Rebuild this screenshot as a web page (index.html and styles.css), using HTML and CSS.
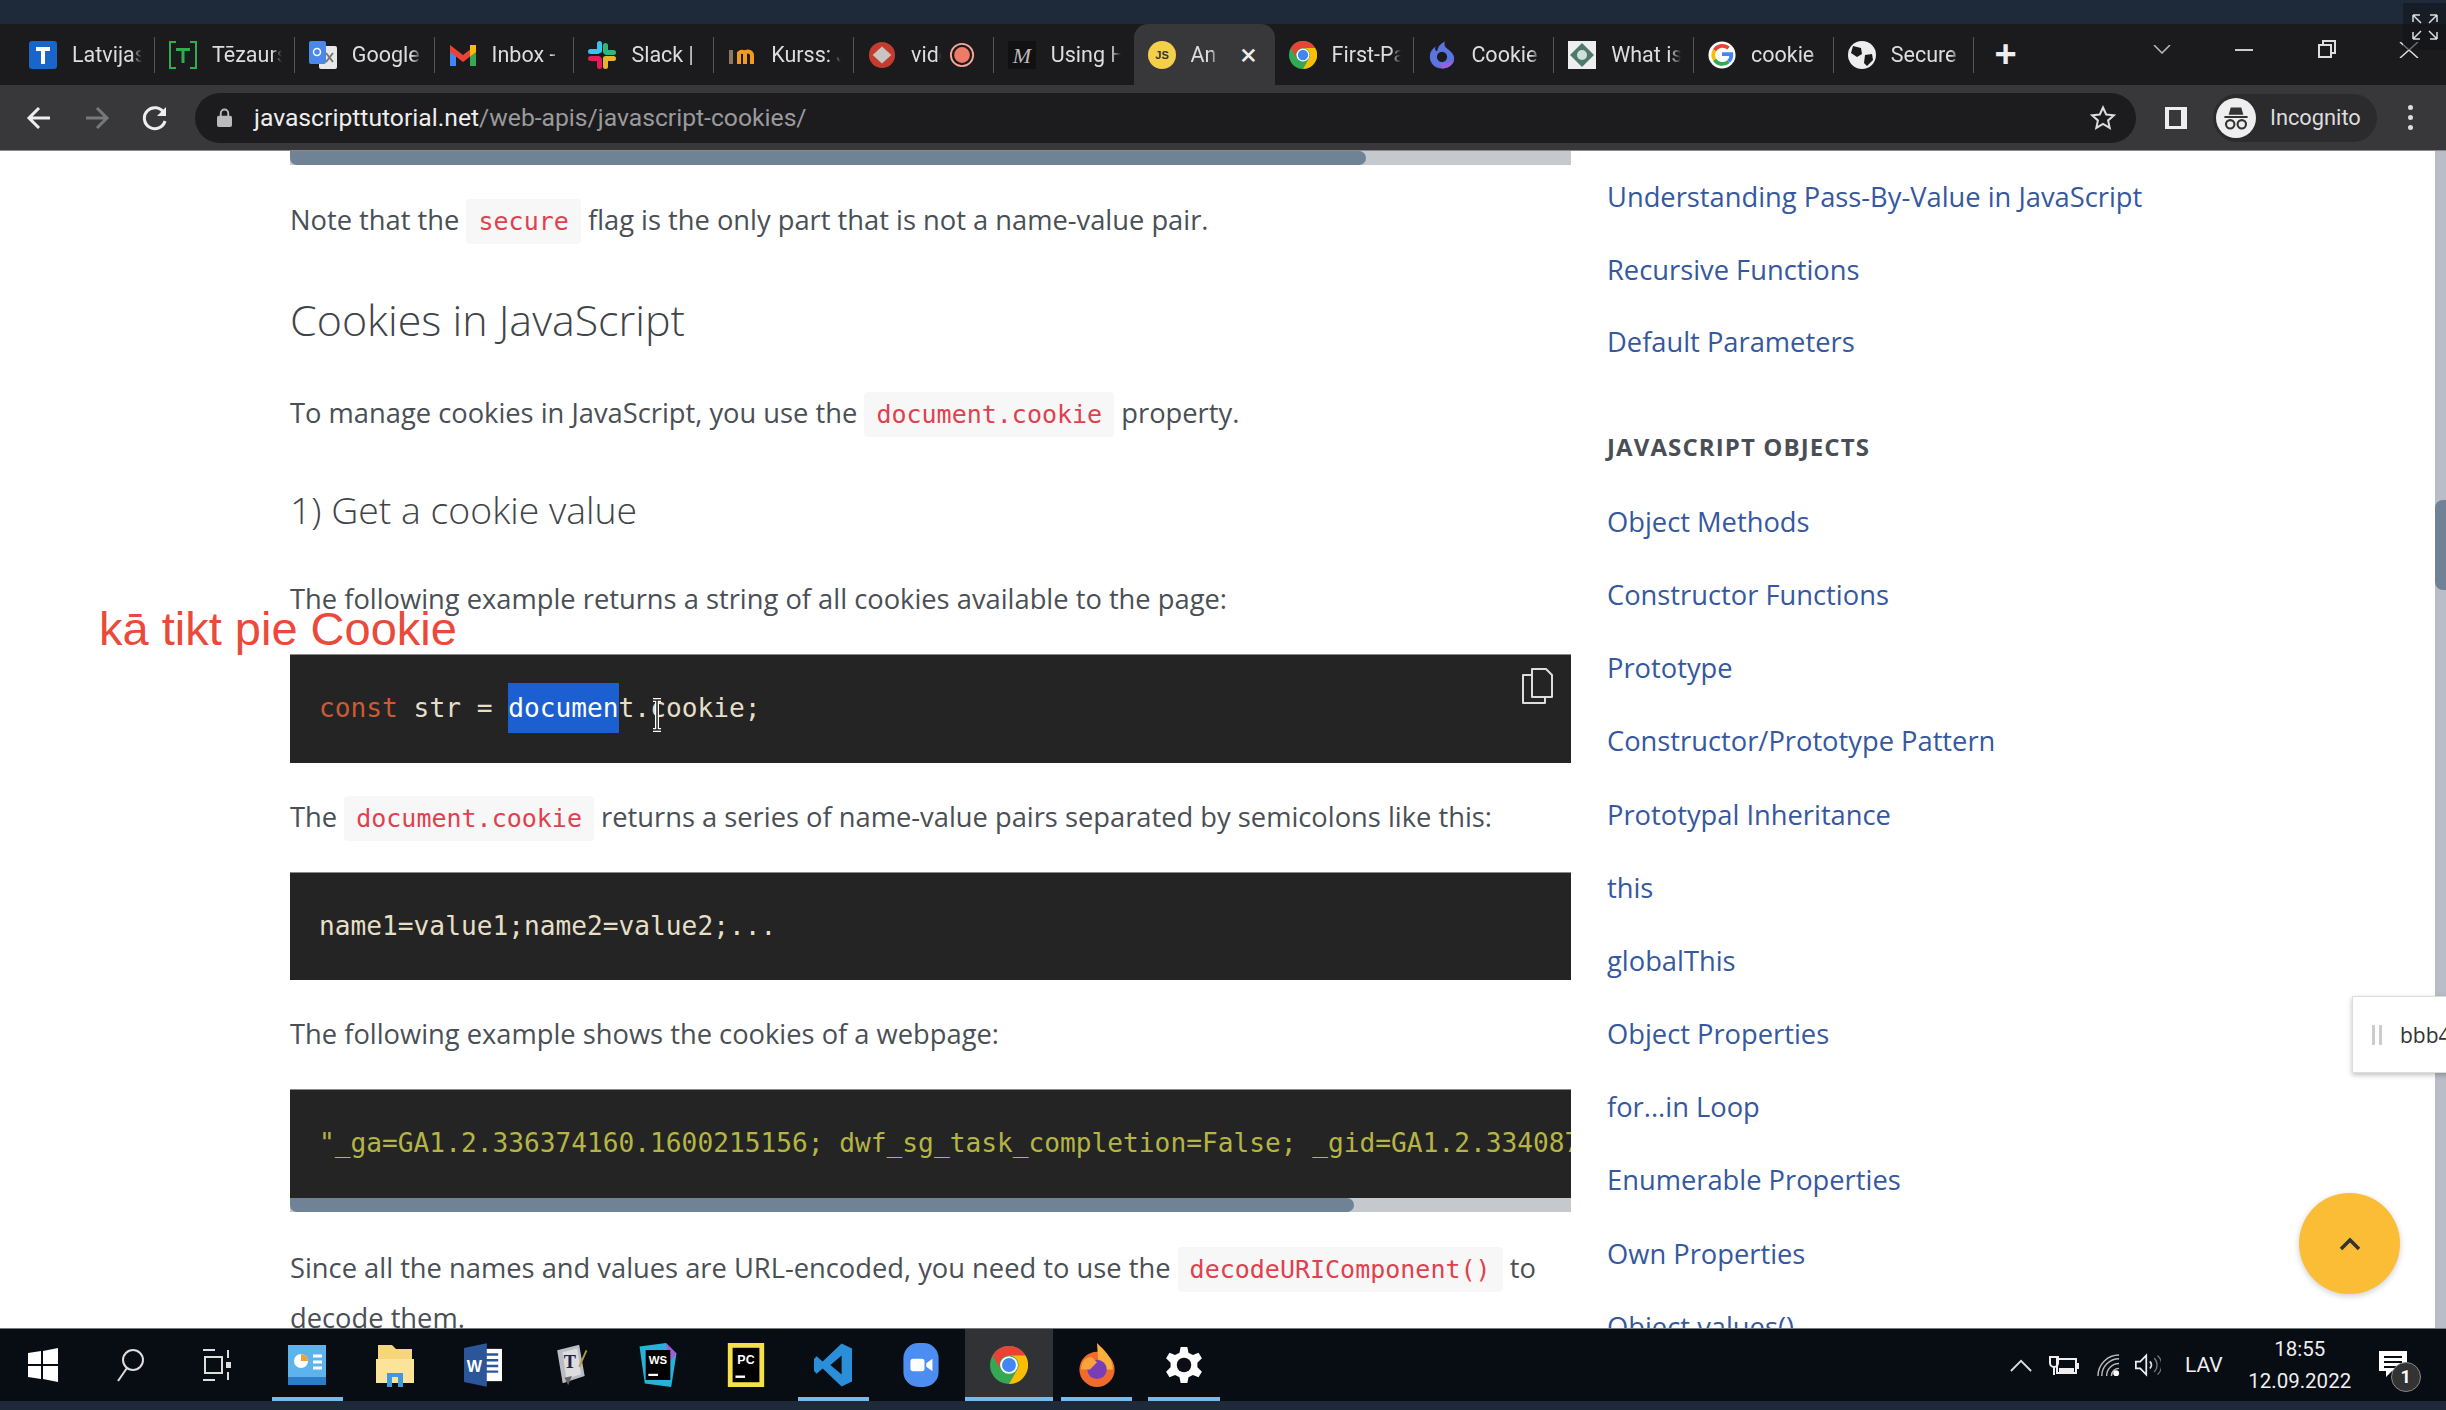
FILE: index.html
```html
<!DOCTYPE html>
<html lang="en">
<head>
    <meta charset="UTF-8">
    <meta name="viewport" content="width=device-width, initial-scale=1.0">
    <title>JavaScript Cookies</title>
    <link rel="stylesheet" href="styles.css">
</head>
<body>
    <div class="top-strip"></div>

    <div class="tab-bar">
        <div class="tab"><svg class="fav" viewBox="0 0 28 28"><rect width="28" height="28" rx="3" fill="#1a66c8"/><path d="M7 6h14v4h-5v13h-4V10H7z" fill="#fff"/></svg><span class="tab-title">Latvijas</span></div>
        <div class="tab"><svg class="fav" viewBox="0 0 28 28"><path d="M7 1H1v26h6M21 1h6v26h-6" fill="none" stroke="#2fae4e" stroke-width="2"/><path d="M7 7h14v3h-5.500v12h-3V10H7z" fill="#2fae4e"/></svg><span class="tab-title">Tēzaurs</span></div>
        <div class="tab"><svg class="fav" viewBox="0 0 28 28"><rect x="10" y="5" width="18" height="23" rx="2" fill="#e8e8e8"/><rect width="17" height="23" rx="2" fill="#4a89e8"/><path d="M17 12l7 9M24 12l-7 9" stroke="#777" stroke-width="2"/><circle cx="8" cy="11" r="3.500" fill="none" stroke="#fff" stroke-width="1.500"/></svg><span class="tab-title">Google</span></div>
        <div class="tab"><svg class="fav" viewBox="0 0 28 28"><path d="M1 4v21h6V11z" fill="#4285f4"/><path d="M27 4v21h-6V11z" fill="#34a853"/><path d="M1 4l13 10L27 4v7L14 21 1 11z" fill="#ea4335"/><path d="M21 4h6v7l-6 4.500z" fill="#fbbc04"/></svg><span class="tab-title">Inbox -</span></div>
        <div class="tab"><svg class="fav" viewBox="0 0 28 28"><rect x="9" y="0" width="5" height="12" rx="2.500" fill="#36c5f0"/><rect x="0" y="8" width="12" height="5" rx="2.500" fill="#36c5f0"/><rect x="15" y="2" width="5" height="11" rx="2.500" fill="#2eb67d"/><rect x="16" y="9" width="12" height="5" rx="2.500" fill="#2eb67d"/><rect x="15" y="15" width="13" height="5" rx="2.500" fill="#ecb22e"/><rect x="15" y="16" width="5" height="12" rx="2.500" fill="#ecb22e"/><rect x="9" y="16" width="5" height="12" rx="2.500" fill="#e01e5a"/><rect x="0" y="15" width="13" height="5" rx="2.500" fill="#e01e5a"/></svg><span class="tab-title">Slack |</span></div>
        <div class="tab"><svg class="fav" viewBox="0 0 28 22"><path d="M3 6v14" stroke="#8a7a60" stroke-width="4"/><path d="M11 20V9a4 4 0 0 1 6 0v11M17 9a4 4 0 0 1 7 3v8" fill="none" stroke="#f59b1c" stroke-width="4"/></svg><span class="tab-title">Kurss: J</span></div>
        <div class="tab"><svg class="fav" viewBox="0 0 30 30"><circle cx="15" cy="15" r="14" fill="#c43c30"/><path d="M5 15l10-9 10 9-10 9z" fill="#c9c4c0"/></svg><span class="tab-title short">video</span><svg class="rec-dot" viewBox="0 0 28 28"><circle cx="14" cy="14" r="12" fill="none" stroke="#f4a898" stroke-width="2"/><circle cx="14" cy="14" r="8.500" fill="#ee7a68"/></svg></div>
        <div class="tab before-active"><svg class="fav" viewBox="0 0 28 28"><rect width="28" height="28" fill="#111"/><text x="14" y="22" class="fav-m">M</text></svg><span class="tab-title">Using H</span></div>
        <div class="tab active"><svg class="fav" viewBox="0 0 28 28"><circle cx="14" cy="14" r="14" fill="#f4cf4c"/><text x="14" y="18" class="fav-js">JS</text></svg><span class="tab-title short">An</span><span class="tab-close">×</span></div>
        <div class="tab"><svg class="fav" viewBox="0 0 30 30"><use href="#chrome-icon"/></svg><span class="tab-title">First-Pa</span></div>
        <div class="tab"><svg class="fav" viewBox="0 0 30 30"><path d="M15 29.500C7 29.500 2 24 2 17c0-5 2-8 6-11-1 3 0 5 2 5 0-4 3-8 8-10.500-1 4 0 6 3 8 4 3 7 6 7 10 0 7-6 11-13 11z" fill="#5b74e0"/><path d="M15 29.500c5 0 11-3 13-9-4 3-9 3-15 3z" fill="#9a5ee0"/><circle cx="15" cy="17" r="5.500" fill="#1b1b1d"/></svg><span class="tab-title">Cookie</span></div>
        <div class="tab"><svg class="fav" viewBox="0 0 28 28"><rect width="28" height="28" fill="#eee"/><path d="M14 2l12 12-12 12L2 14z" fill="#4f7a6b"/><circle cx="14" cy="14" r="5" fill="#cfe0d8"/></svg><span class="tab-title">What is</span></div>
        <div class="tab"><svg class="fav" viewBox="0 0 30 30"><circle cx="15" cy="15" r="14.500" fill="#fff"/><path d="M15 14h10a10 10 0 0 1-3 8" fill="none" stroke="#4285f4" stroke-width="4"/><path d="M22 7.500a10 10 0 0 0-15 2.500" fill="none" stroke="#ea4335" stroke-width="4"/><path d="M7 10a10 10 0 0 0 0 10" fill="none" stroke="#fbbc04" stroke-width="4"/><path d="M7 20a10 10 0 0 0 15 2" fill="none" stroke="#34a853" stroke-width="4"/></svg><span class="tab-title">cookie</span></div>
        <div class="tab"><svg class="fav" viewBox="0 0 28 28"><circle cx="14" cy="14" r="14" fill="#eee"/><path d="M5 5l8 2 1 6-5 3-6-4zM17 14l7-1 1 6-6 6-3-3z" fill="#1b1b1d"/></svg><span class="tab-title">Secure</span></div>
        <span class="new-tab">+</span>
        <div class="window-btns">
            <svg class="win-caret" viewBox="0 0 18 9"><path d="M1 0l8 8 8-8" fill="none" stroke="#bbb" stroke-width="1.500"/></svg>
            <span class="win-min"></span>
            <svg class="win-restore" viewBox="0 0 18 18"><path d="M1 5h12v12H1zM5 5V1h12v12h-4" fill="none" stroke="#ddd" stroke-width="2"/></svg>
            <svg class="win-close" viewBox="0 0 20 16"><path d="M1 0l18 16M19 0L1 16" stroke="#ddd" stroke-width="1.500"/></svg>
        </div>
    </div>

    <div class="toolbar">
        <svg class="nav-icon" viewBox="0 0 26 26"><path d="M24 13H3M13 3L3 13l10 10" fill="none" stroke="#eee" stroke-width="3"/></svg>
        <svg class="nav-icon" viewBox="0 0 26 26"><path d="M2 13h21M13 3l10 10-10 10" fill="none" stroke="#77787a" stroke-width="3"/></svg>
        <svg class="nav-icon" viewBox="0 0 26 26"><path d="M22 8a10.500 10.500 0 1 0 1 8" fill="none" stroke="#eee" stroke-width="3"/><path d="M24 2v9h-9z" fill="#eee"/></svg>
        <div class="omnibox">
            <svg class="lock" viewBox="0 0 16 20"><path d="M4 9V5.500a4 4 0 0 1 8 0V9" fill="none" stroke="#bbb" stroke-width="2"/><rect y="8" width="16" height="12" rx="2" fill="#bbb"/></svg>
            <span class="url"><b>javascripttutorial.net</b>/web-apis/javascript-cookies/</span>
            <svg class="star" viewBox="0 0 26 26"><path d="M13 2.500l3.200 7 7.600.800-5.700 5.100 1.600 7.500L13 19l-6.700 3.900 1.600-7.500-5.700-5.100 7.600-.800z" fill="none" stroke="#ddd" stroke-width="2"/></svg>
        </div>
        <svg class="side-icon" viewBox="0 0 26 26"><rect x="2" y="2" width="22" height="22" fill="#eee"/><rect x="6" y="5" width="12" height="16" fill="#38383a"/></svg>
        <div class="incognito">
            <svg class="incog-icon" viewBox="0 0 38 38"><circle cx="19" cy="19" r="19" fill="#eee"/><path d="M12 16l2-7h10l2 7zM8 17h22v2H8z" fill="#333"/><circle cx="13.500" cy="25" r="4" fill="none" stroke="#333" stroke-width="2"/><circle cx="24.500" cy="25" r="4" fill="none" stroke="#333" stroke-width="2"/></svg>
            <span>Incognito</span>
        </div>
        <div class="menu-dots"><i></i><i></i><i></i></div>
    </div>

    <div class="page">
        <main class="article">
            <div class="bar-top"><div class="bar-thumb top-thumb"></div></div>
            <p class="first">Note that the <code>secure</code> flag is the only part that is not a name-value pair.</p>
            <h2>Cookies in JavaScript</h2>
            <p>To manage cookies in JavaScript, you use the <code>document.cookie</code> property.</p>
            <h3>1) Get a cookie value</h3>
            <p>The following example returns a string of all cookies available to the page:</p>
            <div class="code-block">
                <pre><span class="kw">const</span> str = <span class="sel">documen</span>t.cookie;</pre>
                <svg class="copy" viewBox="0 0 34 38"><path d="M12 2h14l6 6v22H12z" fill="none" stroke="#ddd" stroke-width="2" stroke-linejoin="round"/><path d="M12 8H3v28h22v-6" fill="none" stroke="#ddd" stroke-width="2" stroke-linejoin="round"/></svg>
                <svg class="ibeam" viewBox="0 0 14 34"><path d="M3 2h8M3 32h8M7 2v30" fill="none" stroke="#fff" stroke-width="4"/><path d="M3 2h8M3 32h8M7 2v30" fill="none" stroke="#222" stroke-width="1.500"/></svg>
            </div>
            <p>The <code>document.cookie</code> returns a series of name-value pairs separated by semicolons like this:</p>
            <div class="code-block"><pre>name1=value1;name2=value2;...</pre></div>
            <p>The following example shows the cookies of a webpage:</p>
            <div class="code-block scroll-code">
                <pre class="str">"_ga=GA1.2.336374160.1600215156; dwf_sg_task_completion=False; _gid=GA1.2.33408713</pre>
                <div class="bar-bottom"><div class="bar-thumb bottom-thumb"></div></div>
            </div>
            <p>Since all the names and values are URL-encoded, you need to use the <code>decodeURIComponent()</code> to decode them.</p>
        </main>

        <aside class="sidebar">
            <ul class="side-list top-list">
                <li><a href="#">Understanding Pass-By-Value in JavaScript</a></li>
                <li><a href="#">Recursive Functions</a></li>
                <li><a href="#">Default Parameters</a></li>
            </ul>
            <h4>JAVASCRIPT OBJECTS</h4>
            <ul class="side-list">
                <li><a href="#">Object Methods</a></li>
                <li><a href="#">Constructor Functions</a></li>
                <li><a href="#">Prototype</a></li>
                <li><a href="#">Constructor/Prototype Pattern</a></li>
                <li><a href="#">Prototypal Inheritance</a></li>
                <li><a href="#">this</a></li>
                <li><a href="#">globalThis</a></li>
                <li><a href="#">Object Properties</a></li>
                <li><a href="#">for...in Loop</a></li>
                <li><a href="#">Enumerable Properties</a></li>
                <li><a href="#">Own Properties</a></li>
                <li><a href="#">Object.values()</a></li>
            </ul>
        </aside>

        <div class="page-scroll"><div class="page-scroll-thumb"></div></div>

        <div class="caption">kā tikt pie Cookie</div>
        <div class="float-note"><span class="grip"></span><span class="note-text">bbb4</span></div>
        <div class="to-top"><svg viewBox="0 0 22 14"><path d="M2 12l9-9 9 9" fill="none" stroke="#333" stroke-width="3.500"/></svg></div>
    </div>

    <div class="taskbar">
        <svg class="task-icon" viewBox="0 0 30 34"><path d="M0 5l13-2v13H0zM15 3l15-3v16H15zM0 18h13v13L0 29zM15 18h15v16l-15-3z" fill="#fff"/></svg>
        <svg class="task-icon" viewBox="0 0 30 34"><circle cx="18" cy="12" r="10" fill="none" stroke="#ddd" stroke-width="2"/><path d="M12 20L3 33" stroke="#ddd" stroke-width="2"/></svg>
        <svg class="task-icon" viewBox="0 0 30 34"><path d="M1 2h12M1 32h12M3 9h17v16H3zM26 2v8M26 24v8" fill="none" stroke="#ddd" stroke-width="2"/><rect x="24" y="14" width="5" height="6" fill="#ddd"/></svg>
        <div class="task-slot on"><svg viewBox="0 0 38 40"><rect width="38" height="40" fill="#5db4ec"/><circle cx="13" cy="16" r="7" fill="#fff"/><path d="M13 16V9a7 7 0 0 1 7 7z" fill="#f0a030"/><path d="M25 11h9M25 17h9M25 23h9" stroke="#fff" stroke-width="3"/><rect y="32" width="38" height="8" fill="#2c7cc8"/></svg></div>
        <div class="task-slot"><svg viewBox="0 0 38 44"><path d="M2 2h14l4 4h16v30H2z" fill="#f6d67a"/><path d="M0 16h38v24H0z" fill="#fbe39a"/><path d="M11 44V30h16v14h-5V34h-6v10z" fill="#3d9ae0"/></svg></div>
        <div class="task-slot"><svg viewBox="0 0 40 46"><rect x="14" y="6" width="26" height="34" fill="#fff"/><path d="M20 12h16M20 18h16M20 24h16M20 30h16" stroke="#2b579a" stroke-width="2.500"/><path d="M0 5l24-5v46L0 41z" fill="#2b579a"/><text x="11" y="30" class="task-w">W</text></svg></div>
        <div class="task-slot"><svg viewBox="0 0 40 48"><path d="M6 8l24-6 6 34-24 8z" fill="#b9bdc3"/><path d="M12 10l16-4 4 28-16 5z" fill="#ddd"/><text x="20" y="27" class="task-t">T</text><path d="M30 26l8-18" stroke="#b89b3a" stroke-width="2"/><path d="M14 38l4 8 4-10z" fill="#666"/></svg></div>
        <div class="task-slot"><svg viewBox="0 0 42 50"><path d="M0 4l30-4 12 12-6 38-30-4z" fill="#27b3d8"/><path d="M30 0l12 12-8 10z" fill="#a05ed6"/><rect x="7" y="8" width="28" height="34" fill="#000"/><text x="21" y="24" class="task-ws">WS</text><rect x="10" y="35" width="11" height="2.500" fill="#fff"/></svg></div>
        <div class="task-slot"><svg viewBox="0 0 38 46"><rect width="38" height="46" fill="#f5e04a"/><rect x="5" y="5" width="28" height="36" fill="#000"/><text x="19" y="22" class="task-ws">PC</text><rect x="8" y="34" width="10" height="2.500" fill="#fff"/></svg></div>
        <div class="task-slot on"><svg viewBox="0 0 44 50"><path d="M32 0l12 6v38l-12 6L10 29l-7 6-3-3v-14l3-3 7 6z" fill="#2a8fd8"/><path d="M32 14v22l-13-11z" fill="#0b0e14"/></svg></div>
        <div class="task-slot"><svg viewBox="0 0 40 50"><rect width="40" height="50" rx="17" fill="#4b8df0"/><rect x="8" y="18" width="16" height="14" rx="3" fill="#fff"/><path d="M26 23l7-5v14l-7-5z" fill="#fff"/></svg></div>
        <div class="task-slot on current"><svg viewBox="0 0 30 30"><use href="#chrome-icon"/></svg></div>
        <div class="task-slot on"><svg viewBox="0 0 40 50"><circle cx="20" cy="30" r="20" fill="#f06a2c"/><path d="M20 0c8 8 18 16 18 30H22z" fill="#fbb03b"/><circle cx="20" cy="30" r="11" fill="#7a3db8"/><path d="M2 30C2 20 8 16 14 16l6 6-8 8z" fill="#f8a23a"/></svg></div>
        <div class="task-slot on"><svg viewBox="0 0 34 34"><path d="M14 1h6l1 5 4 2 5-2 3 5-4 4v4l4 4-3 5-5-2-4 2-1 5h-6l-1-5-4-2-5 2-3-5 4-4v-4L1 11l3-5 5 2 4-2z" fill="#fff"/><circle cx="17" cy="17" r="6.500" fill="#0b0e14"/></svg></div>

        <div class="tray">
            <svg class="tray-caret" viewBox="0 0 24 14"><path d="M1 13L12 2l11 11" fill="none" stroke="#ddd" stroke-width="2"/></svg>
            <svg class="tray-power" viewBox="0 0 30 20"><path d="M1 2h8v6a4 4 0 0 1-8 0zM5 12v8" fill="none" stroke="#eee" stroke-width="2"/><rect x="8" y="4" width="19" height="14" fill="none" stroke="#eee" stroke-width="2"/><rect x="10" y="13" width="15" height="4" fill="#eee"/><rect x="27" y="8" width="3" height="6" fill="#eee"/></svg>
            <svg class="tray-wifi" viewBox="0 0 24 24"><path d="M1 23A22 22 0 0 1 23 1M5 23A18 18 0 0 1 23 5M10 23a13 13 0 0 1 13-13M15 23a8 8 0 0 1 8-8" fill="none" stroke="#bbb" stroke-width="1.500"/><circle cx="20" cy="20" r="3" fill="#fff"/></svg>
            <svg class="tray-vol" viewBox="0 0 30 26"><path d="M1 9h5l7-7v22l-7-7H1z" fill="none" stroke="#eee" stroke-width="2"/><path d="M17 9a5 5 0 0 1 0 8" fill="none" stroke="#ddd" stroke-width="2"/><path d="M22 5a11 11 0 0 1 0 16M26 2a15 15 0 0 1 0 22" fill="none" stroke="#777" stroke-width="1.500"/></svg>
            <span class="tray-lang">LAV</span>
            <div class="tray-clock"><span>18:55</span><span>12.09.2022</span></div>
            <div class="tray-notify">
                <svg viewBox="0 0 30 30"><path d="M1 1h28v20H14l-6 6v-6H1z" fill="#fff"/><path d="M6 7h18M6 12h18M6 17h12" stroke="#0b0e14" stroke-width="2"/></svg>
                <span class="notify-badge">1</span>
            </div>
        </div>
    </div>
    <div class="bottom-strip"></div>

    <div class="expand-btn">
        <svg viewBox="0 0 30 30"><path d="M3 3l8 8M3 3v7M3 3h7M27 3l-8 8M27 3v7M27 3h-7M3 27l8-8M3 27v-7M3 27h7M27 27l-8-8M27 27v-7M27 27h-7" fill="none" stroke="#ddd" stroke-width="1.500"/></svg>
    </div>

    <svg class="defs" viewBox="0 0 30 30">
        <defs>
            <g id="chrome-icon">
                <circle cx="15" cy="15" r="15" fill="#34a853"/>
                <path d="M15 0a15 15 0 0 1 13 7.500H15a7.500 7.500 0 0 0-6.500 11.200L2 7.500A15 15 0 0 1 15 0z" fill="#ea4335"/>
                <path d="M28 7.500A15 15 0 0 1 15 30l6.500-11.200A7.500 7.500 0 0 0 15 7.500z" fill="#fbbc04"/>
                <circle cx="15" cy="15" r="7" fill="#fff"/>
                <circle cx="15" cy="15" r="5.500" fill="#4285f4"/>
            </g>
        </defs>
    </svg>
</body>
</html>
```

FILE: styles.css
```css
* {
    box-sizing: border-box;
}
html, body {
    margin: 0;
    height: 1410px;
    overflow: hidden;
}
body {
    font-family: "Open Sans", Arial, sans-serif;
    display: flex;
    flex-direction: column;
    background: #fff;
    position: relative;
}
.defs {
    position: absolute;
    width: 0;
    height: 0;
}
.top-strip {
    height: 24px;
    background: #1e2a3a;
}
.bottom-strip {
    height: 9px;
    background: #1e2a3a;
}

/* browser tabs */
.tab-bar {
    height: 61px;
    background: #1b1b1d;
    display: flex;
    align-items: stretch;
    color: #ddd;
}
.tab {
    width: 139.800px;
    flex: none;
    display: flex;
    align-items: center;
    padding: 0 13px 0 14px;
    position: relative;
    overflow: hidden;
    font-size: 21.500px;
    font-family: Roboto, Arial, sans-serif;
}
.tab:first-child {
    width: 155px;
    padding-left: 29px;
}
.tab::after {
    content: "";
    position: absolute;
    right: 0;
    top: 13px;
    bottom: 12px;
    width: 1px;
    background: #55565a;
}
.tab.active {
    background: #38383a;
    border-radius: 14px 14px 0 0;
    width: 141px;
}
.tab.active::after,
.tab.before-active::after {
    display: none;
}
.fav {
    width: 28px;
    height: 28px;
    flex: none;
    margin-right: 15px;
}
.tab-title {
    white-space: nowrap;
    overflow: hidden;
    flex: 1;
    -webkit-mask-image: linear-gradient(90deg, #000 85%, transparent 100%);
    mask-image: linear-gradient(90deg, #000 85%, transparent 100%);
}
.tab-title.short {
    flex: 0 0 auto;
    max-width: 30px;
}
.rec-dot {
    width: 26px;
    height: 26px;
    margin-left: 8px;
    flex: none;
}
.fav-m {
    font: italic 22px "Liberation Serif", serif;
    fill: #bbb;
    text-anchor: middle;
}
.fav-js {
    font: bold 11px Arial, sans-serif;
    fill: #333;
    text-anchor: middle;
}
.tab-close {
    margin-left: 24px;
    font-size: 30px;
    line-height: 1;
    color: #eee;
}
.new-tab {
    font-size: 38px;
    line-height: 61px;
    font-weight: 600;
    margin-left: 21px;
    color: #eee;
    font-family: Arial, sans-serif;
}
.window-btns {
    position: absolute;
    top: 24px;
    left: 2152px;
    width: 291px;
    height: 50px;
}
.win-caret,
.win-min,
.win-restore,
.win-close {
    position: absolute;
}
.win-caret {
    left: 1px;
    top: 21px;
    width: 18px;
    height: 9px;
}
.win-min {
    left: 83px;
    top: 25px;
    width: 18px;
    height: 2px;
    background: #ccc;
}
.win-restore {
    left: 166px;
    top: 16px;
    width: 18px;
    height: 18px;
}
.win-close {
    left: 247px;
    top: 18px;
    width: 20px;
    height: 16px;
}

/* toolbar */
.toolbar {
    height: 65px;
    background: #38383a;
    display: flex;
    align-items: center;
    padding-left: 26px;
}
.nav-icon {
    width: 26px;
    height: 26px;
    margin-right: 32px;
    flex: none;
}
.nav-icon:nth-child(3) {
    margin-right: 27px;
}
.omnibox {
    width: 1941px;
    height: 50px;
    background: #1c1c1e;
    border-radius: 25px;
    display: flex;
    align-items: center;
    padding: 0 20px 0 22px;
    color: #9a9a9c;
    font-size: 24.700px;
    font-family: Roboto, Arial, sans-serif;
}
.lock {
    width: 15px;
    height: 19px;
    margin-right: 22px;
}
.url {
    flex: 1;
}
.url b {
    font-weight: 400;
    color: #eee;
}
.star {
    width: 26px;
    height: 26px;
}
.side-icon {
    width: 26px;
    height: 26px;
    margin-left: 27px;
    flex: none;
}
.incognito {
    margin-left: 24px;
    width: 164px;
    height: 48px;
    border-radius: 24px;
    background: #2b2b2d;
    display: flex;
    align-items: center;
    flex: none;
    padding-left: 3px;
    color: #ddd;
    font-size: 21.800px;
    font-family: Roboto, Arial, sans-serif;
}
.incog-icon {
    width: 40px;
    height: 40px;
    margin-right: 14px;
}
.menu-dots {
    margin-left: 31px;
    display: flex;
    flex-direction: column;
    gap: 5px;
}
.menu-dots i {
    width: 5px;
    height: 5px;
    border-radius: 50%;
    background: #ddd;
}

/* page */
.page {
    height: 1179px;
    position: relative;
    display: flex;
    overflow: hidden;
    background: #fff;
    border-top: 1px solid #8a8a8c;
    border-bottom: 1px solid #77787a;
    color: #4a4f55;
}
.article {
    width: 1281px;
    margin-left: 290px;
    flex: none;
    font-size: 27.300px;
}
.article p {
    margin: 0;
    line-height: 50px;
}
.article code {
    font-family: "DejaVu Sans Mono", monospace;
    font-size: 25px;
    line-height: 1;
    color: #e0414f;
    background: #f7f7f7;
    padding: 8px 12px;
    border-radius: 4px;
}
.bar-top {
    height: 14px;
    background: #c5c9ce;
}
.bar-thumb {
    height: 100%;
    background: #6f8296;
    border-radius: 0 8px 8px 8px;
}
.top-thumb {
    width: 1076px;
}
.article .first {
    margin-top: 30px;
}
h2 {
    font-size: 43px;
    font-weight: 300;
    margin: 49px 0 42px;
    line-height: 52px;
    color: #3f4449;
}
h3 {
    font-size: 37.400px;
    font-weight: 300;
    margin: 49px 0 41px;
    line-height: 46px;
    color: #3f4449;
}
.code-block {
    background: #242424;
    margin: 30px 0 29px;
    height: 108.500px;
    position: relative;
    overflow: hidden;
    border-top: 1px solid #8a8a8c;
}
.code-block pre {
    margin: 0;
    padding: 0 0 0 29px;
    font-family: "DejaVu Sans Mono", monospace;
    font-size: 26.200px;
    line-height: 106px;
    color: #e6dfc8;
    white-space: pre;
}
.kw {
    color: #cc5a35;
}
.sel {
    background: #1c5fd0;
    color: #fff;
    padding: 10px 0;
}
.copy {
    position: absolute;
    right: 17px;
    top: 12px;
    width: 34px;
    height: 38px;
}
.ibeam {
    position: absolute;
    left: 360px;
    top: 43px;
    width: 14px;
    height: 34px;
}
.scroll-code {
    height: 123px;
    margin-bottom: 31px;
    background: linear-gradient(#242424 109px, #fff 109px);
}
.scroll-code .str {
    color: #b5b544;
    height: 108px;
}
.bar-bottom {
    height: 14px;
    background: #c5c9ce;
}
.bottom-thumb {
    width: 1064px;
}

/* sidebar */
.sidebar {
    margin-left: 36px;
    width: 800px;
    flex: none;
    font-size: 27.300px;
    padding-top: 10px;
}
.side-list {
    list-style: none;
    margin: 0;
    padding: 0;
}
.side-list li {
    height: 73.200px;
    line-height: 73.200px;
}
.top-list li {
    height: 72.600px;
    line-height: 72.600px;
}
.side-list a {
    color: #35589f;
    text-decoration: none;
}
h4 {
    font-size: 24px;
    font-weight: 700;
    letter-spacing: 1.100px;
    margin: 0;
    line-height: 30px;
    padding: 53px 0 23px;
    color: #4a4f55;
}
.page-scroll {
    position: absolute;
    right: 0;
    top: 0;
    bottom: 0;
    width: 11px;
    background: #b9bdc6;
}
.page-scroll-thumb {
    margin-top: 349px;
    height: 90px;
    border-radius: 8px 0 0 8px;
    background: #6f8296;
}
.caption {
    position: absolute;
    left: 99px;
    top: 450px;
    font-family: "Liberation Sans", Arial, sans-serif;
    font-size: 47px;
    line-height: 56px;
    color: #ea4a3a;
}
.float-note {
    position: absolute;
    left: 2352px;
    top: 845px;
    width: 100px;
    height: 77px;
    background: #fff;
    border: 1px solid #ddd;
    box-shadow: 0 2px 5px rgba(0, 0, 0, .25);
    display: flex;
    align-items: center;
    padding-left: 19px;
    white-space: nowrap;
}
.grip {
    width: 10px;
    height: 20px;
    border-left: 3px solid #ccc;
    border-right: 3px solid #ccc;
    margin-right: 18px;
    flex: none;
}
.note-text {
    font-size: 21px;
    color: #333;
}
.to-top {
    position: absolute;
    left: 2299px;
    top: 1042px;
    width: 101px;
    height: 101px;
    border-radius: 50%;
    background: #fbbc36;
    box-shadow: 0 2px 6px rgba(0, 0, 0, .2);
    display: flex;
    align-items: center;
    justify-content: center;
}
.to-top svg {
    width: 22px;
    height: 14px;
}

/* windows taskbar */
.taskbar {
    height: 72px;
    background: #080c13;
    display: flex;
    position: relative;
}
.task-icon {
    width: 30px;
    height: 34px;
    flex: none;
    align-self: center;
    margin: 0 28.500px;
}
.task-icon:first-child {
    margin-left: 28px;
}
.task-slot {
    width: 87.700px;
    flex: none;
    display: flex;
    align-items: center;
    justify-content: center;
    position: relative;
}
.task-icon + .task-slot {
    margin-left: 3px;
}
.task-slot svg {
    height: 44px;
    width: 38px;
}
.task-slot.on::after {
    content: "";
    position: absolute;
    left: 8px;
    right: 8px;
    bottom: 0;
    height: 4px;
    background: #76b9ed;
}
.task-slot.current {
    background: #303236;
}
.task-slot.current::after {
    left: 0;
    right: 0;
}
.task-w {
    font: bold 17px Arial, sans-serif;
    fill: #fff;
    text-anchor: middle;
}
.task-t {
    font: bold 20px "Liberation Serif", serif;
    fill: #224;
    text-anchor: middle;
}
.task-ws {
    font: bold 13px Arial, sans-serif;
    fill: #fff;
    text-anchor: middle;
}
.tray {
    position: absolute;
    left: 2010px;
    top: 0;
    right: 0;
    bottom: 0;
    display: flex;
    align-items: center;
    color: #eee;
    font-family: Roboto, Arial, sans-serif;
}
.tray-caret {
    width: 22px;
    height: 13px;
    margin-right: 17px;
}
.tray-power {
    width: 30px;
    height: 20px;
    margin-right: 18px;
}
.tray-wifi {
    width: 23px;
    height: 23px;
    margin-right: 15px;
}
.tray-vol {
    width: 26px;
    height: 24px;
    margin-right: 24px;
}
.tray-lang {
    font-size: 21px;
    margin-right: 27px;
}
.tray-clock {
    width: 100px;
    display: flex;
    flex-direction: column;
    align-items: center;
    font-size: 20.500px;
    line-height: 32px;
    white-space: nowrap;
}
.tray-notify {
    position: relative;
    margin-left: 28px;
    width: 30px;
    height: 30px;
}
.tray-notify svg {
    width: 30px;
    height: 30px;
}
.notify-badge {
    position: absolute;
    left: -1px;
    top: 12px;
    margin-left: 14px;
    width: 30px;
    height: 30px;
    border-radius: 50%;
    background: #333;
    border: 1px solid #888;
    color: #fff;
    font-size: 18px;
    font-weight: 700;
    text-align: center;
    line-height: 28px;
}
.expand-btn {
    position: absolute;
    right: 0;
    top: 3px;
    width: 43px;
    height: 47px;
    background: rgba(16, 18, 22, .55);
    display: flex;
    align-items: center;
    justify-content: center;
}
.expand-btn svg {
    width: 30px;
    height: 30px;
}
```
